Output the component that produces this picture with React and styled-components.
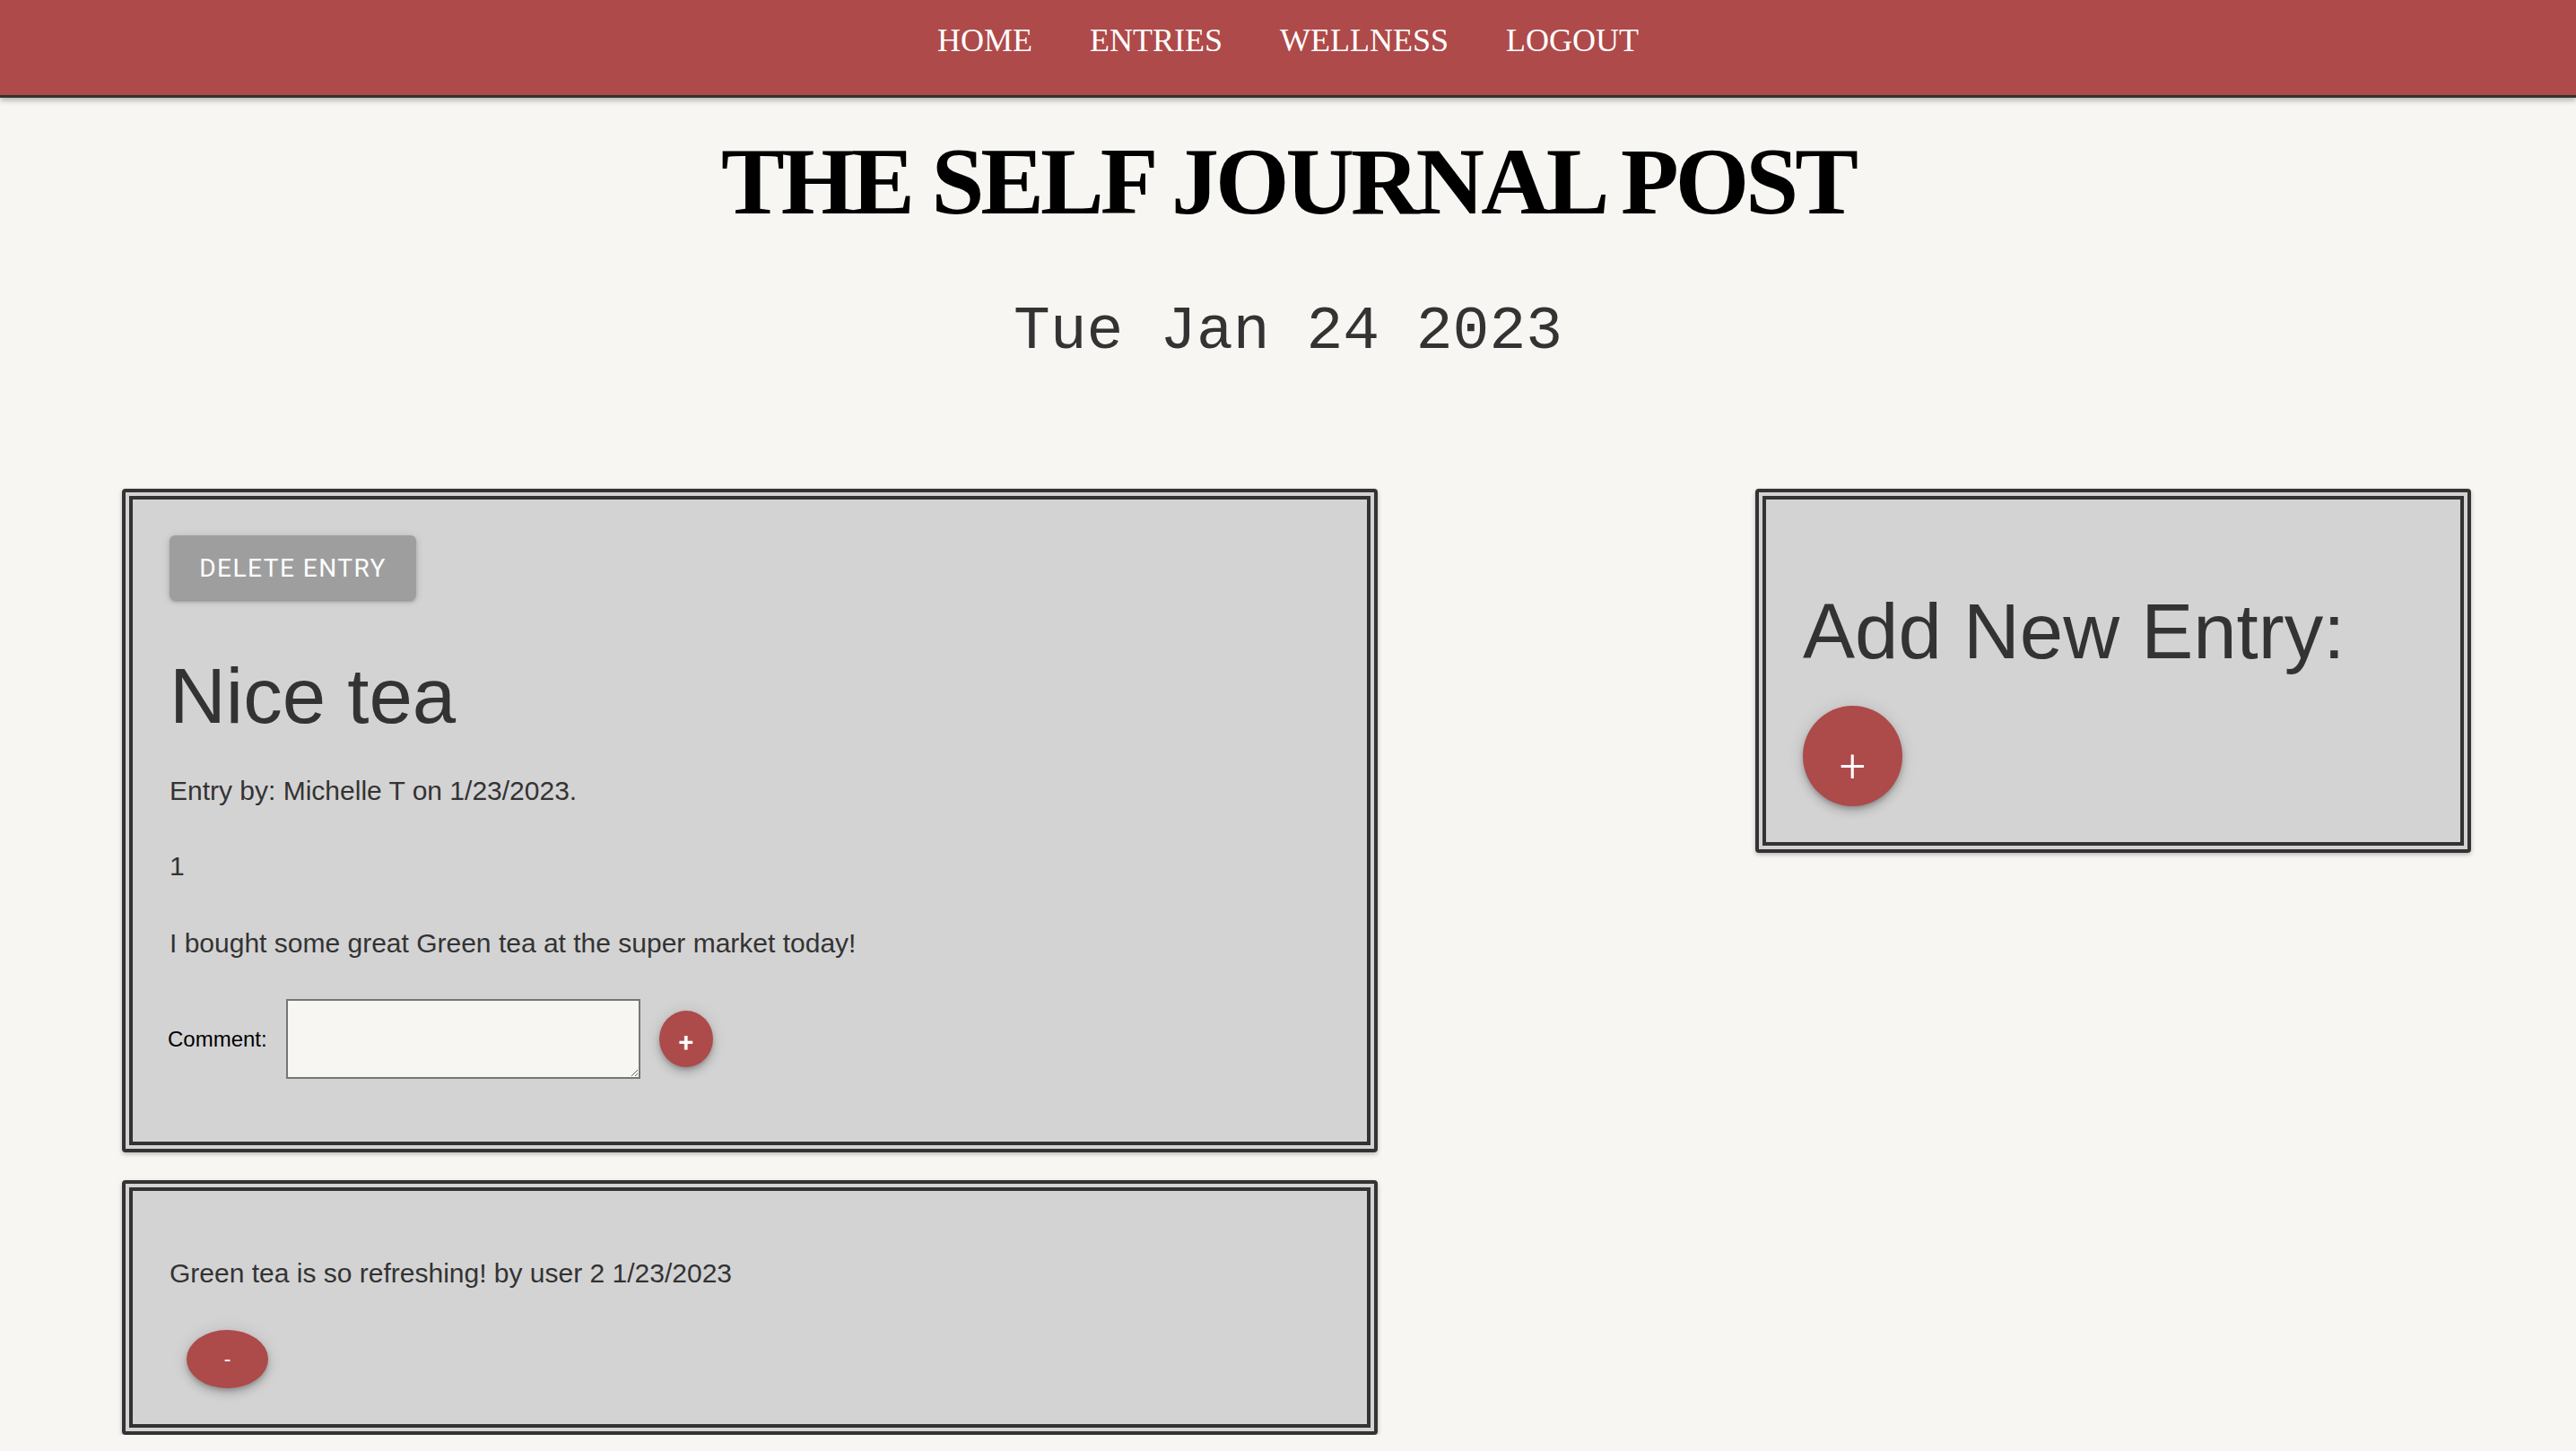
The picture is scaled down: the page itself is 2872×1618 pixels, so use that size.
import React from "react";
import styled, { createGlobalStyle } from "styled-components";

const GlobalStyle = createGlobalStyle`
  html, body { margin: 0; padding: 0; }
  body {
    background: #f7f6f2;
    font-family: "Liberation Sans", Arial, sans-serif;
    color: #333;
  }
  * { box-sizing: border-box; }
`;

const NavBar = styled.nav`
  height: 109px;
  background: #ae4a4a;
  border-bottom: 3px solid #333;
  box-shadow: 0 3px 6px rgba(0, 0, 0, 0.28);
  display: flex;
  justify-content: center;
  align-items: flex-start;
  gap: 64px;
  padding-top: 24px;
  position: relative;
  z-index: 1;
`;

const NavLink = styled.a`
  font-family: "Liberation Serif", "Times New Roman", serif;
  font-size: 36px;
  color: #fff;
  text-decoration: none;
  line-height: normal;
`;

const Masthead = styled.header`
  display: flex;
  flex-direction: column;
  align-items: center;
`;

const Title = styled.h1`
  margin: 41px 0 0;
  font-family: "Liberation Serif", "Times New Roman", serif;
  font-weight: 700;
  font-size: 106px;
  line-height: 1;
  letter-spacing: -4px;
  color: #000;
`;

const DateLine = styled.div`
  margin-top: 80px;
  font-family: "Liberation Mono", "Courier New", monospace;
  font-size: 68px;
  line-height: 1;
  color: #333;
`;

const Columns = styled.main`
  display: flex;
  justify-content: space-between;
  align-items: flex-start;
  padding: 0 117px 0 136px;
  margin-top: 141px;
`;

const Stack = styled.div`
  width: ${(p) => p.$width}px;
  display: flex;
  flex-direction: column;
  gap: 31px;
`;

const Card = styled.section`
  width: 100%;
  background: #d4d3d4;
  border: 12px double #333;
  border-radius: 4px;
  box-shadow: 0 2px 5px rgba(0, 0, 0, 0.25);
  padding: 40px 41px;
  display: flex;
  flex-direction: column;
  align-items: flex-start;
`;

const DeleteButton = styled.button`
  width: 275px;
  height: 72px;
  border: none;
  border-radius: 6px;
  background: #9e9e9e;
  color: #fff;
  font-family: Roboto, "Liberation Sans", sans-serif;
  font-weight: 400;
  font-size: 28px;
  letter-spacing: 1.5px;
  text-transform: uppercase;
  box-shadow: 0 3px 3px -2px rgba(0,0,0,0.2), 0 2px 4px 0 rgba(0,0,0,0.14), 0 1px 10px 0 rgba(0,0,0,0.12);
  cursor: pointer;
`;

const Heading = styled.h2`
  margin: ${(p) => p.$top}px 0 0;
  font-family: "Liberation Sans", Arial, sans-serif;
  font-weight: 400;
  font-size: 87px;
  line-height: 1;
  color: #333;
`;

const Text = styled.p`
  margin: ${(p) => p.$top}px 0 0;
  font-size: 30px;
  line-height: 36px;
  color: #333;
`;

const CommentRow = styled.form`
  margin: 44px 0 30px;
  display: flex;
  align-items: center;
  gap: 21px;
`;

const Label = styled.label`
  font-size: 24px;
  color: #000;
  margin-left: -2px;
`;

const CommentBox = styled.textarea`
  width: 395px;
  height: 89px;
  border: 2px solid #767676;
  background: #f7f6f2;
  font-family: "Liberation Sans", Arial, sans-serif;
  font-size: 24px;
  display: block;
`;

const RoundButton = styled.button`
  width: ${(p) => p.$w}px;
  height: ${(p) => p.$h}px;
  margin: ${(p) => p.$margin || "0"};
  border: none;
  border-radius: 50%;
  background: #ad4a4a;
  color: #fff;
  padding: ${(p) => p.$shift || 0}px 0 0;
  display: flex;
  align-items: center;
  justify-content: center;
  font-family: Roboto, "Liberation Sans", sans-serif;
  font-size: ${(p) => p.$size}px;
  font-weight: ${(p) => p.$weight || 400};
  line-height: 1;
  box-shadow: 0 3px 5px -1px rgba(0,0,0,0.2), 0 6px 10px 0 rgba(0,0,0,0.14), 0 1px 18px 0 rgba(0,0,0,0.12);
  cursor: pointer;
  flex-shrink: 0;
`;

export default function App() {
  return (
    <>
      <GlobalStyle />
      <NavBar>
        <NavLink href="#">HOME</NavLink>
        <NavLink href="#">ENTRIES</NavLink>
        <NavLink href="#">WELLNESS</NavLink>
        <NavLink href="#">LOGOUT</NavLink>
      </NavBar>
      <Masthead>
        <Title>THE SELF JOURNAL POST</Title>
        <DateLine>Tue Jan 24 2023</DateLine>
      </Masthead>
      <Columns>
        <Stack $width={1400}>
          <Card>
            <DeleteButton>Delete Entry</DeleteButton>
            <Heading $top={63}>Nice tea</Heading>
            <Text $top={45}>Entry by: Michelle T on 1/23/2023.</Text>
            <Text $top={48}>1</Text>
            <Text $top={50}>I bought some great Green tea at the super market today!</Text>
            <CommentRow onSubmit={(e) => e.preventDefault()}>
              <Label htmlFor="comment">Comment:</Label>
              <CommentBox id="comment" />
              <RoundButton $w={60} $h={63} $size={30} $weight={500} $shift={6}>+</RoundButton>
            </CommentRow>
          </Card>
          <Card>
            <Text $top={34}>Green tea is so refreshing! by user 2 1/23/2023</Text>
            <RoundButton $w={91} $h={65} $size={24} $margin="45px 0 0 19px">-</RoundButton>
          </Card>
        </Stack>
        <Stack $width={798}>
          <Card>
            <Heading $top={63}>Add New Entry:</Heading>
            <RoundButton $w={111} $h={112} $size={52} $weight={300} $shift={24} $margin="40px 0 0">+</RoundButton>
          </Card>
        </Stack>
      </Columns>
    </>
  );
}
